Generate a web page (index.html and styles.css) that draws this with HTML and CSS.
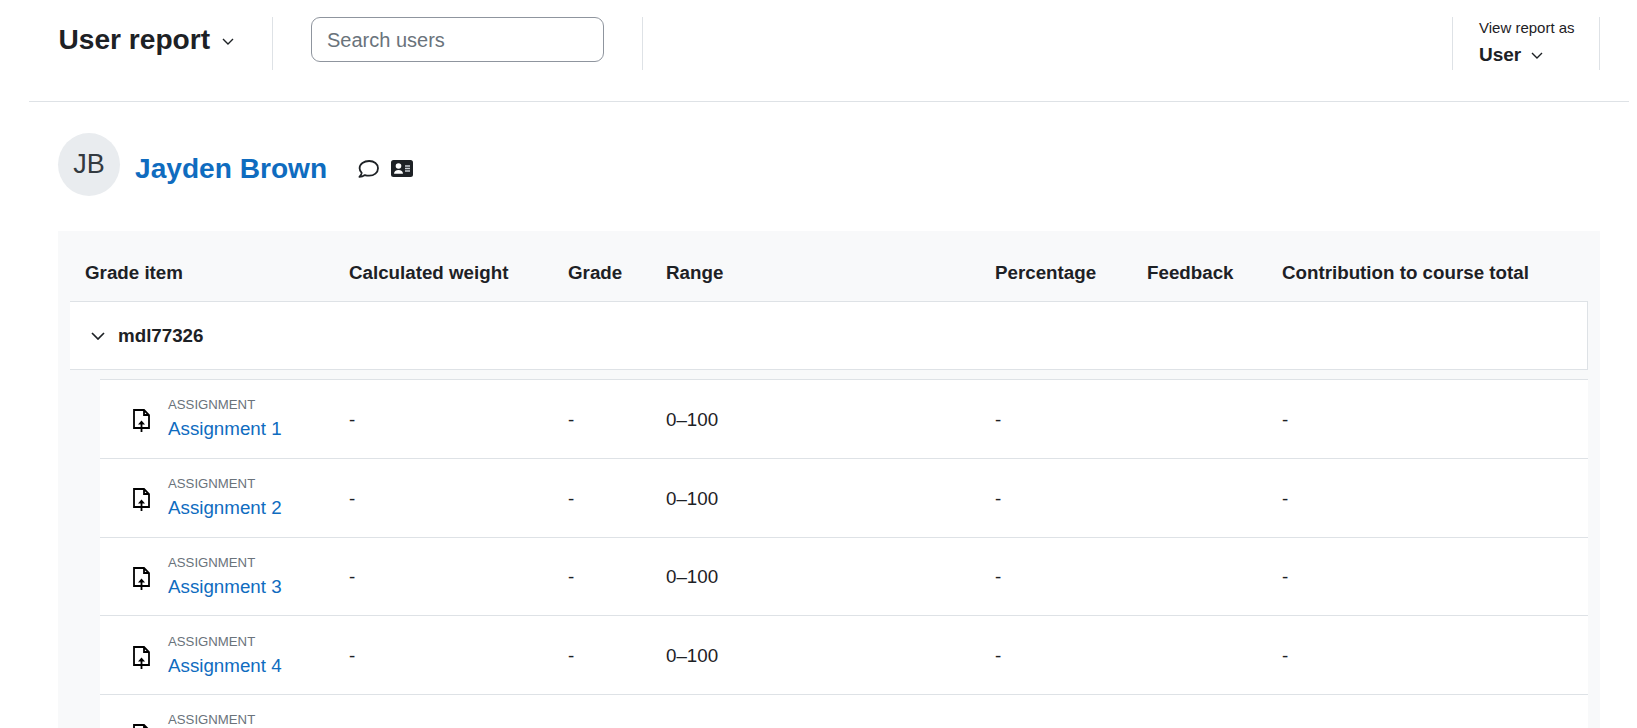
FILE: index.html
```html
<!DOCTYPE html>
<html lang="en">
<head>
<meta charset="utf-8">
<title>User report</title>
<link rel="stylesheet" href="styles.css">
</head>
<body>
<div class="page">
  <header class="tertiary">
    <div class="title-cell">
      <h1 class="title">User report</h1>
      <svg class="caret" viewBox="0 0 12 7" width="12" height="7"><path d="M1 1l5 5 5-5" fill="none" stroke="#1d2125" stroke-width="1.400"/></svg>
    </div>
    <div class="search-cell">
      <input class="search" type="text" placeholder="Search users">
    </div>
    <div class="spacer"></div>
    <div class="view-cell">
      <div class="view-label">View report as</div>
      <div class="view-value">User <svg viewBox="0 0 12 7" width="12" height="7"><path d="M1 1l5 5 5-5" fill="none" stroke="#1d2125" stroke-width="1.400"/></svg></div>
    </div>
  </header>

  <section class="user">
    <div class="avatar">JB</div>
    <a class="user-name" href="#">Jayden Brown</a>
    <div class="user-icons">
      <svg viewBox="0 0 21 18" width="21" height="18"><path d="M11.200 1c-5.300 0-9.600 3.100-9.600 7.200 0 1.800.8 3.400 2.100 4.600-.2 1.300-1 2.700-2.300 4 2 0 3.900-.6 5.500-1.700 1.300.4 2.700.6 4.300.6 4.900 0 8.800-3.100 8.800-7.500S16.100 1 11.200 1z" fill="none" stroke="#1d2125" stroke-width="1.800" stroke-linejoin="round"/></svg>
      <svg viewBox="0 0 22 17" width="22" height="17"><rect width="22" height="17" rx="2.500" fill="#1d2125"/><circle cx="7.500" cy="6" r="2.800" fill="#fff"/><path d="M3 13.800c0-2.400 1.800-3.800 4.500-3.800s4.500 1.400 4.500 3.800z" fill="#fff"/><path d="M14 6h5M14 8.500h5M14 11h5" stroke="#c9ced3" stroke-width="1.400"/></svg>
    </div>
  </section>

  <section class="panel">
    <div class="grid head">
      <div>Grade item</div>
      <div>Calculated weight</div>
      <div>Grade</div>
      <div>Range</div>
      <div>Percentage</div>
      <div>Feedback</div>
      <div>Contribution to course total</div>
    </div>
    <div class="group">
      <svg viewBox="0 0 14 8" width="14" height="8"><path d="M1 1l6 6 6-6" fill="none" stroke="#1d2125" stroke-width="1.700"/></svg>
      <span>mdl77326</span>
    </div>
    <div class="items">
      <div class="grid item">
        <div class="name">
          <svg class="file" viewBox="0 0 17 23" width="17" height="23"><path d="M1 1h10l5 5v13H1zM11 1v5h5" fill="none" stroke="#000" stroke-width="1.800"/><path d="M8.500 23V13" stroke="#000" stroke-width="1.800"/><path d="M5 15.500l3.500-4 3.500 4z" fill="#000"/></svg>
          <div class="label"><div class="kind">ASSIGNMENT</div><a href="#">Assignment 1</a></div>
        </div>
        <div>-</div><div>-</div><div>0–100</div><div>-</div><div></div><div>-</div>
      </div>
      <div class="grid item">
        <div class="name">
          <svg class="file" viewBox="0 0 17 23" width="17" height="23"><path d="M1 1h10l5 5v13H1zM11 1v5h5" fill="none" stroke="#000" stroke-width="1.800"/><path d="M8.500 23V13" stroke="#000" stroke-width="1.800"/><path d="M5 15.500l3.500-4 3.500 4z" fill="#000"/></svg>
          <div class="label"><div class="kind">ASSIGNMENT</div><a href="#">Assignment 2</a></div>
        </div>
        <div>-</div><div>-</div><div>0–100</div><div>-</div><div></div><div>-</div>
      </div>
      <div class="grid item">
        <div class="name">
          <svg class="file" viewBox="0 0 17 23" width="17" height="23"><path d="M1 1h10l5 5v13H1zM11 1v5h5" fill="none" stroke="#000" stroke-width="1.800"/><path d="M8.500 23V13" stroke="#000" stroke-width="1.800"/><path d="M5 15.500l3.500-4 3.500 4z" fill="#000"/></svg>
          <div class="label"><div class="kind">ASSIGNMENT</div><a href="#">Assignment 3</a></div>
        </div>
        <div>-</div><div>-</div><div>0–100</div><div>-</div><div></div><div>-</div>
      </div>
      <div class="grid item">
        <div class="name">
          <svg class="file" viewBox="0 0 17 23" width="17" height="23"><path d="M1 1h10l5 5v13H1zM11 1v5h5" fill="none" stroke="#000" stroke-width="1.800"/><path d="M8.500 23V13" stroke="#000" stroke-width="1.800"/><path d="M5 15.500l3.500-4 3.500 4z" fill="#000"/></svg>
          <div class="label"><div class="kind">ASSIGNMENT</div><a href="#">Assignment 4</a></div>
        </div>
        <div>-</div><div>-</div><div>0–100</div><div>-</div><div></div><div>-</div>
      </div>
      <div class="grid item">
        <div class="name">
          <svg class="file" viewBox="0 0 17 23" width="17" height="23"><path d="M1 1h10l5 5v13H1zM11 1v5h5" fill="none" stroke="#000" stroke-width="1.800"/><path d="M8.500 23V13" stroke="#000" stroke-width="1.800"/><path d="M5 15.500l3.500-4 3.500 4z" fill="#000"/></svg>
          <div class="label"><div class="kind">ASSIGNMENT</div><a href="#">Assignment 5</a></div>
        </div>
        <div>-</div><div>-</div><div>0–100</div><div>-</div><div></div><div>-</div>
      </div>
    </div>
  </section>
</div>
</body>
</html>
```
FILE: styles.css
```css
* { box-sizing: border-box; }
html, body { margin: 0; height: 100%; overflow: hidden; background: #fff; }
body { font-family: "Liberation Sans", Arial, sans-serif; font-size: 18.750px; color: #1d2125; }
a { color: #0f6cbf; text-decoration: none; }

.page { margin-left: 29px; margin-right: 8px; }

.tertiary { display: flex; align-items: stretch; height: 102px; padding: 17px 29px 0 29px; border-bottom: 1px solid #dee2e6; }
.title-cell { width: 215px; height: 53px; display: flex; align-items: center; gap: 12px; border-right: 1px solid #dee2e6; padding-bottom: 8px; }
.title { margin: 0 0 0 .5px; font-size: 28.125px; line-height: 34px; font-weight: 700; }
.caret { flex: none; margin-top: 3px; }
.search-cell { width: 370px; height: 53px; padding-left: 38px; border-right: 1px solid #dee2e6; }
.search { display: block; width: 293px; height: 45px; padding: 2px 15px 0; border: 1px solid #8f959e; border-radius: 9px; font: 20px "Liberation Sans", Arial, sans-serif; background: #fff; }
.search::placeholder { color: #6a737b; opacity: 1; }
.spacer { flex: 1; }
.view-cell { width: 148px; height: 53px; border-left: 1px solid #dee2e6; border-right: 1px solid #dee2e6; padding-left: 26px; }
.view-label { font-size: 15px; line-height: 20px; margin-top: 1px; }
.view-value { font-size: 19px; line-height: 24px; font-weight: 700; margin-top: 5px; display: flex; align-items: center; gap: 10px; }

.user { display: flex; align-items: center; height: 129px; padding-left: 29px; }
.avatar { width: 62px; height: 63px; border-radius: 50%; background: #e9ecef; color: #343a40; font-size: 27px; display: flex; align-items: center; justify-content: center; margin-top: -4px; }
.user-name { font-size: 28.125px; font-weight: 700; margin-left: 15px; margin-top: 5px; }
.user-icons { display: flex; align-items: center; gap: 12px; margin-left: 31px; margin-top: 4px; }

.panel { margin-left: 29px; margin-right: 29px; background: #f8f9fa; padding: 0 12px; height: 600px; }
.grid { display: grid; }
.head { grid-template-columns: 264px 219px 98px 329px 152px 135px 1fr; height: 70px; padding-left: 15px; font-weight: 700; align-items: center; padding-top: 13px; }
.group { display: flex; align-items: center; gap: 13px; height: 69px; padding-left: 21px; background: #fff; border: 1px solid #dee2e6; border-left: 0; font-weight: 700; font-size: 18.750px; }
.items { margin-left: 30px; margin-top: 9px; }
.item { grid-template-columns: 249px 219px 98px 329px 152px 135px 1fr; height: 78.750px; padding-top: 2px; background: #fff; border-top: 1px solid #dee2e6; align-items: center; }
.name { display: flex; align-items: center; gap: 18px; padding-left: 33px; }
.file { flex: none; margin-top: 2px; }
.label { padding-bottom: 1px; }
.kind { font-size: 13.200px; line-height: 16px; color: #6a737b; margin-bottom: 4px; }
.name a { font-size: 18.750px; line-height: 24px; display: block; }
```
